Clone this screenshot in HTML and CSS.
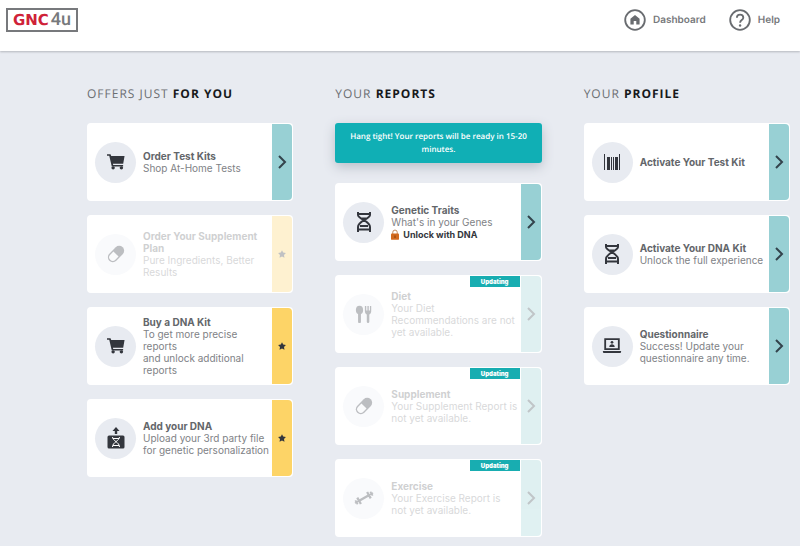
FILE: index.html
```
<!DOCTYPE html>
<html lang="en">
<head>
    <meta charset="UTF-8">
    <meta name="viewport" content="width=device-width, initial-scale=1.0">
    <title>GNC4u Dashboard</title>
    <link rel="stylesheet" href="styles.css">
</head>
<body>
    <svg class="sprite" aria-hidden="true">
        <symbol id="cart" viewBox="0 0 20 18">
            <path d="M0 0.3h3.900l.8 2H19.500l-1.500 8.700H6.600l.3 1.200h11v1.800H5.300L2.500 2.100H0z"/>
            <circle cx="6.800" cy="15.500" r="1.900"/>
            <circle cx="16" cy="15.500" r="1.900"/>
        </symbol>
        <symbol id="pill" viewBox="0 0 20 20">
            <g transform="rotate(-45 10 10)">
                <rect x="-0.500" y="4.500" width="21" height="11" rx="5.500"/>
                <path class="cutout" d="M10 6H5a4 4 0 0 0 0 8h5z"/>
            </g>
        </symbol>
        <symbol id="dna" viewBox="0 0 20 22">
            <path class="line" d="M4 1v3c0 4 12 6 12 12v5M16 1v3c0 4-12 6-12 12v5M3 3h14M7 7.500h6M6 15h8M4 18.500h12"/>
        </symbol>
        <symbol id="upload" viewBox="0 0 20 22">
            <path d="M10 0l3.500 4h-2.300v3H8.800V4H6.500zM3 8.500h14a1.500 1.500 0 0 1 1.500 1.500v10a1.500 1.500 0 0 1-1.500 1.500H3A1.500 1.500 0 0 1 1.500 20V10A1.500 1.500 0 0 1 3 8.500z"/>
            <path class="helix" d="M6.500 10c0 4 7 5 7 10M13.500 10c0 4-7 5-7 10M7 11.500h6M7 18.500h6"/>
        </symbol>
        <symbol id="utensils" viewBox="0 0 20 20">
            <ellipse cx="5" cy="5.500" rx="4" ry="4.800"/>
            <path d="M3.400 9h3.200v9.500a1.600 1.600 0 0 1-3.200 0zM11 1h1.500v5h1.300V1h1.500v5h1.300V1H18v6c0 1.800-.8 3-2.100 3.500v8a1.400 1.400 0 0 1-2.800 0v-8C11.800 10 11 8.800 11 7z"/>
        </symbol>
        <symbol id="dumbbell" viewBox="0 0 22 22">
            <g transform="rotate(-30 11 11)">
                <path d="M-0.500 10.200h23v1.600h-23zM0.500 8.500h2v5h-2zM3.500 7h2.500v8H3.500zM6 9.700h10v2.600H6zM16 7h2.500v8H16zM19.500 8.500h2v5h-2z"/>
            </g>
        </symbol>
        <symbol id="barcode" viewBox="0 0 18 18">
            <path d="M1 1h1v16H1zM4 4h3v13H4zM8 4h1v13H8zM10 4h1v13h-1zM12 4h3v13h-3zM16 1h1v16h-1z"/>
        </symbol>
        <symbol id="laptop" viewBox="0 0 22 18">
            <path class="line" d="M3.500 1.500h15v11h-15z"/>
            <circle cx="11" cy="5" r="1.500"/>
            <path d="M8 10c0-4 6-4 6 0zM1 14.500h20v.7c0 .8-.6 1.400-1.400 1.400H2.400c-.8 0-1.400-.6-1.400-1.400z"/>
        </symbol>
        <symbol id="star" viewBox="0 0 10 10">
            <path d="M5 .2l1.500 3 3.400.5-2.400 2.400.6 3.600L5 8.100 1.900 9.700l.6-3.600L.1 3.700l3.400-.5z"/>
        </symbol>
        <symbol id="chevron" viewBox="0 0 10 16">
            <path d="M2 2l6 6-6 6"/>
        </symbol>
    </svg>

    <header class="topbar">
        <a class="logo" href="#"><span class="logo-gnc">GNC</span><span class="logo-4u">4u</span></a>
        <nav class="nav">
            <a href="#">
                <svg class="nav-icon" viewBox="0 0 24 24"><circle cx="12" cy="12" r="10.700"/><path class="solid" d="M12 6.500l5 4V17h-3.600v-4h-2.800v4H7v-6.500z"/></svg>
                Dashboard
            </a>
            <a href="#">
                <svg class="nav-icon" viewBox="0 0 24 24"><circle cx="12" cy="12" r="10.700"/><path d="M8.600 9.500c0-4.500 7-4.500 7 0 0 2.700-3.500 2.500-3.500 5.500"/><circle class="solid" cx="12.100" cy="18" r="1.300"/></svg>
                Help
            </a>
        </nav>
    </header>

    <main class="board">
        <section class="column">
            <h2>OFFERS JUST <b>FOR YOU</b></h2>
            <button class="card" type="button">
                <span class="badge"><svg class="icon"><use href="#cart"/></svg></span>
                <span class="info"><strong>Order Test Kits</strong><span>Shop At-Home Tests</span></span>
                <span class="tab"><svg class="chevron"><use href="#chevron"/></svg></span>
            </button>
            <button class="card" type="button" disabled>
                <span class="badge"><svg class="icon"><use href="#pill"/></svg></span>
                <span class="info"><strong>Order Your Supplement Plan</strong><span>Pure Ingredients, Better Results</span></span>
                <span class="tab tab-offer"><svg class="star"><use href="#star"/></svg></span>
            </button>
            <button class="card" type="button">
                <span class="badge"><svg class="icon"><use href="#cart"/></svg></span>
                <span class="info"><strong>Buy a DNA Kit</strong><span>To get more precise reports<br>and unlock additional reports</span></span>
                <span class="tab tab-offer"><svg class="star"><use href="#star"/></svg></span>
            </button>
            <button class="card" type="button">
                <span class="badge"><svg class="icon icon-tall"><use href="#upload"/></svg></span>
                <span class="info"><strong>Add your DNA</strong><span>Upload your 3rd party file for genetic personalization</span></span>
                <span class="tab tab-offer"><svg class="star"><use href="#star"/></svg></span>
            </button>
        </section>

        <section class="column">
            <h2>YOUR <b>REPORTS</b></h2>
            <p class="notice" role="status">Hang tight! Your reports will be ready in <span class="minutes">15-20</span> minutes.</p>
            <button class="card" type="button">
                <span class="badge"><svg class="icon icon-tall"><use href="#dna"/></svg></span>
                <span class="info">
                    <strong>Genetic Traits</strong><span>What's in your Genes</span>
                    <span class="unlock"><svg class="lock" viewBox="0 0 9 12"><path class="shackle" d="M2 6V3.500a2.500 2.500 0 0 1 5 0V6"/><rect y="5" width="9" height="7" rx="1"/><path class="keyhole" d="M4 7h1v3H4z"/></svg>Unlock with DNA</span>
                </span>
                <span class="tab"><svg class="chevron"><use href="#chevron"/></svg></span>
            </button>
            <button class="card" type="button" disabled>
                <span class="badge"><svg class="icon"><use href="#utensils"/></svg></span>
                <span class="info"><strong>Diet</strong><span>Your Diet Recommendations are not yet available.</span></span>
                <span class="tab"><svg class="chevron"><use href="#chevron"/></svg></span>
                <span class="flag">Updating</span>
            </button>
            <button class="card" type="button" disabled>
                <span class="badge"><svg class="icon"><use href="#pill"/></svg></span>
                <span class="info"><strong>Supplement</strong><span>Your Supplement Report is<br>not yet available.</span></span>
                <span class="tab"><svg class="chevron"><use href="#chevron"/></svg></span>
                <span class="flag">Updating</span>
            </button>
            <button class="card" type="button" disabled>
                <span class="badge"><svg class="icon icon-tall"><use href="#dumbbell"/></svg></span>
                <span class="info"><strong>Exercise</strong><span>Your Exercise Report is<br>not yet available.</span></span>
                <span class="tab"><svg class="chevron"><use href="#chevron"/></svg></span>
                <span class="flag">Updating</span>
            </button>
        </section>

        <section class="column">
            <h2>YOUR <b>PROFILE</b></h2>
            <button class="card" type="button">
                <span class="badge"><svg class="icon"><use href="#barcode"/></svg></span>
                <span class="info"><strong>Activate Your Test Kit</strong></span>
                <span class="tab"><svg class="chevron"><use href="#chevron"/></svg></span>
            </button>
            <button class="card" type="button">
                <span class="badge"><svg class="icon icon-tall"><use href="#dna"/></svg></span>
                <span class="info"><strong>Activate Your DNA Kit</strong><span>Unlock the full experience</span></span>
                <span class="tab"><svg class="chevron"><use href="#chevron"/></svg></span>
            </button>
            <button class="card" type="button">
                <span class="badge"><svg class="icon icon-tall"><use href="#laptop"/></svg></span>
                <span class="info"><strong>Questionnaire</strong><span>Success! Update your questionnaire any time.</span></span>
                <span class="tab"><svg class="chevron"><use href="#chevron"/></svg></span>
            </button>
        </section>
    </main>
</body>
</html>
```
FILE: styles.css
```
* {
    box-sizing: border-box;
}

body {
    margin: 0;
    background-color: #e8ebf1;
    color: #77797c;
    font-family: Inter, sans-serif;
    font-size: 10px;
    text-rendering: geometricPrecision;
}

.sprite {
    position: absolute;
    width: 0;
    height: 0;
}

/* header */
.topbar {
    display: flex;
    align-items: flex-start;
    justify-content: space-between;
    height: 51px;
    padding: 8px 20px 0 6px;
    background-color: #fff;
    box-shadow: 0 1px 2px #b4b7be;
}

.logo {
    display: flex;
    align-items: center;
    justify-content: center;
    gap: 2px;
    width: 72px;
    height: 24px;
    border: 2px solid #77797c;
    text-decoration: none;
}

.logo-gnc {
    color: #cf2238;
    font: bold 15px/20px "DejaVu Sans", sans-serif;
}

.logo-4u {
    color: #77797c;
    font: 500 18px/20px Roboto, sans-serif;
}

.nav {
    display: flex;
    gap: 23px;
}

.nav a {
    display: flex;
    align-items: center;
    gap: 7px;
    height: 24px;
    color: #77797c;
    font-weight: 600;
    text-decoration: none;
}

.nav-icon {
    width: 22px;
    height: 22px;
    fill: none;
    stroke: #696c70;
    stroke-width: 2;
}

.nav-icon .solid {
    fill: #696c70;
    stroke: none;
}

/* columns */
.board {
    display: grid;
    grid-template-columns: repeat(3, 1fr);
    gap: 42px;
    padding: 34px 10px 9px 87px;
}

.column {
    display: flex;
    flex-direction: column;
    gap: 14px;
}

.column h2 {
    margin: 0 0 6px;
    color: #6b6e72;
    font: 400 12px/18px "Open Sans", sans-serif;
    letter-spacing: 1px;
}

.column h2 b {
    color: #17191c;
    font-weight: 700;
}

.notice {
    margin: 0 0 6px;
    padding: 7px 12px;
    border-radius: 3px;
    background-color: #10afb5;
    box-shadow: 0 4px 12px #b9bfc9;
    color: #fff;
    font: 600 8px/13px "Open Sans", sans-serif;
    text-align: center;
}

.minutes {
    white-space: nowrap;
}

/* cards */
.card {
    position: relative;
    display: flex;
    align-items: center;
    min-height: 78px;
    padding: 1px 1px 1px 8px;
    border: none;
    border-radius: 4px;
    background-color: #fff;
    color: #808286;
    font: 10px/12px Inter, sans-serif;
    text-align: left;
    cursor: pointer;
}

.badge {
    display: flex;
    flex: none;
    align-items: center;
    justify-content: center;
    width: 41px;
    height: 41px;
    margin-right: 7px;
    border-radius: 50%;
    background-color: #e8ebf1;
}

.icon {
    width: 18px;
    height: 18px;
    color: #33363d;
    fill: currentColor;
}

.icon-tall {
    width: 20px;
    height: 22px;
}

.line {
    fill: none;
    stroke: currentColor;
    stroke-width: 2;
}

.cutout {
    fill: #fff;
}

.helix {
    fill: none;
    stroke: #fff;
    stroke-width: 1;
}

.info {
    display: flex;
    flex: 1;
    flex-direction: column;
    min-width: 0;
    padding-right: 2px;
}

.info strong {
    color: #63666a;
    font-weight: 700;
}

.info .unlock {
    display: flex;
    align-items: center;
    gap: 4px;
    margin-top: 1px;
    color: #33363d;
    font-size: 9px;
    font-weight: 700;
}

.lock {
    width: 8px;
    height: 11px;
    fill: #d2691e;
}

.shackle {
    fill: none;
    stroke: #ba7a48;
    stroke-width: 1;
}

.keyhole {
    fill: #7b3a0c;
}

.tab {
    display: flex;
    flex: none;
    align-self: stretch;
    align-items: center;
    justify-content: center;
    width: 20px;
    border-radius: 0 4px 4px 0;
    background-color: #98d0d4;
}

.tab-offer {
    background-color: #fdd467;
}

.chevron {
    width: 10px;
    height: 16px;
    fill: none;
    stroke: #33434c;
    stroke-width: 2;
}

.star {
    width: 8px;
    height: 8px;
    fill: #33363d;
}

.card:disabled {
    cursor: default;
}

.card:disabled .badge {
    background-color: #f9fafc;
}

.card:disabled .icon,
.card:disabled .info,
.card:disabled .tab {
    opacity: 0.3;
}

.flag {
    position: absolute;
    top: 1px;
    right: 22px;
    width: 50px;
    background-color: #18adb1;
    color: #fff;
    font: 900 6px/11px Inter, sans-serif;
    text-align: center;
}
```
